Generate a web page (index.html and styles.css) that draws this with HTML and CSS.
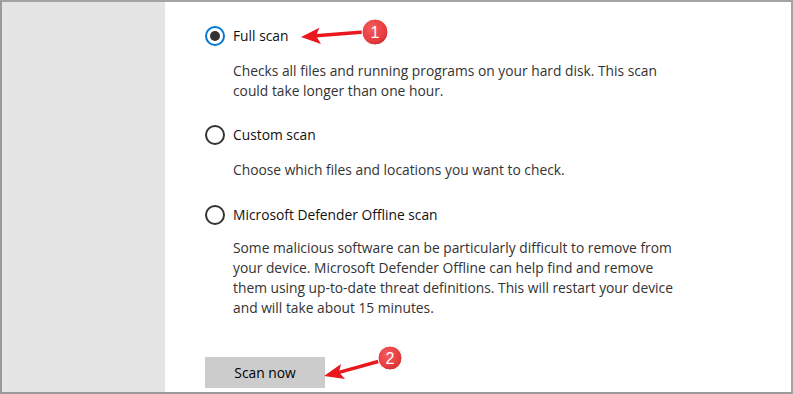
FILE: index.html
```html
<!DOCTYPE html>
<html>
<head>
<meta charset="utf-8">
<link rel="stylesheet" href="styles.css">
</head>
<body>
<div class="frame">
  <aside class="sidebar"></aside>
  <main class="content">
    <div class="option">
      <span class="radio checked"></span>
      <span class="label">Full scan</span>
    </div>
    <p class="desc">Checks all files and running programs on your hard disk. This scan<br>could take longer than one hour.</p>

    <div class="option">
      <span class="radio"></span>
      <span class="label">Custom scan</span>
    </div>
    <p class="desc">Choose which files and locations you want to check.</p>

    <div class="option">
      <span class="radio"></span>
      <span class="label">Microsoft Defender Offline scan</span>
    </div>
    <p class="desc desc-long">Some malicious software can be particularly difficult to remove from<br>your device. Microsoft Defender Offline can help find and remove<br>them using up-to-date threat definitions. This will restart your device<br>and will take about 15 minutes.</p>

    <button class="scan-btn">Scan now</button>
  </main>

  <svg class="annotations" width="793" height="394" viewBox="0 0 793 394">
    <defs>
      <radialGradient id="badge" cx="40%" cy="35%" r="70%">
        <stop offset="0" stop-color="#f55c5e"/>
        <stop offset="0.75" stop-color="#e53b3e"/>
        <stop offset="1" stop-color="#c42a2e"/>
      </radialGradient>
    </defs>
    <g class="arrow">
      <line x1="364" y1="32" x2="316" y2="35.8" stroke="#e8181d" stroke-width="3.4" stroke-linecap="round"/>
      <polygon points="301,37 321,44 316,35.7 319.4,27.8" fill="#e8181d"/>
    </g>
    <circle cx="375" cy="32" r="13" fill="url(#badge)" stroke="#ffffff" stroke-width="1"/>
    <text x="375" y="38" class="badge-num">1</text>

    <g class="arrow">
      <line x1="380" y1="361" x2="339" y2="372.3" stroke="#e8181d" stroke-width="3.4" stroke-linecap="round"/>
      <polygon points="324,376 345,379 339,372.3 341,364" fill="#e8181d"/>
    </g>
    <circle cx="390" cy="358" r="12" fill="url(#badge)" stroke="#ffffff" stroke-width="1"/>
    <text x="390" y="364" class="badge-num">2</text>
  </svg>
</div>
</body>
</html>
```

FILE: styles.css
```css
* {
  box-sizing: border-box;
}

html, body {
  margin: 0;
  padding: 0;
  background: #ffffff;
}

.frame {
  position: relative;
  width: 793px;
  height: 394px;
  display: flex;
  border-top: 2px solid #a3a3a3;
  border-left: 2px solid #9a9a9a;
  border-right: 2px solid #a3a3a3;
  border-bottom: 2px solid #9a9a9a;
  overflow: hidden;
  font-family: "Open Sans", "Noto Sans", sans-serif;
  font-size: 13.8px;
  color: #000;
}

.sidebar {
  width: 163px;
  flex: none;
  background: #e5e5e5;
}

.content {
  flex: 1;
  background: #ffffff;
  padding: 24px 0 0 40px;
  display: flex;
  flex-direction: column;
  align-items: flex-start;
}

.option {
  display: flex;
  align-items: center;
  gap: 8px;
  height: 20px;
}

.radio {
  width: 20px;
  height: 20px;
  border-radius: 50%;
  border: 2px solid #333333;
  display: flex;
  align-items: center;
  justify-content: center;
  background: #fff;
  flex: none;
}

.radio.checked {
  border-color: #0078d7;
}

.radio.checked::after {
  content: "";
  width: 10px;
  height: 10px;
  border-radius: 50%;
  background: #333333;
}

.label {
  color: #111111;
  line-height: 20px;
}

.desc {
  margin: 15px 0 25px 28px;
  line-height: 19.5px;
  color: #333333;
}

.desc-long {
  margin-top: 13px;
  line-height: 20.3px;
  margin-bottom: 38px;
}

.scan-btn {
  width: 120px;
  height: 31px;
  border: none;
  background: #cccccc;
  font-family: inherit;
  font-size: 13.8px;
  color: #000;
  padding: 0;
}

.annotations {
  position: absolute;
  left: -2px;
  top: -2px;
  pointer-events: none;
}

.badge-num {
  font-family: "Liberation Sans", Arial, sans-serif;
  font-size: 16px;
  fill: #ffffff;
  text-anchor: middle;
}
```
